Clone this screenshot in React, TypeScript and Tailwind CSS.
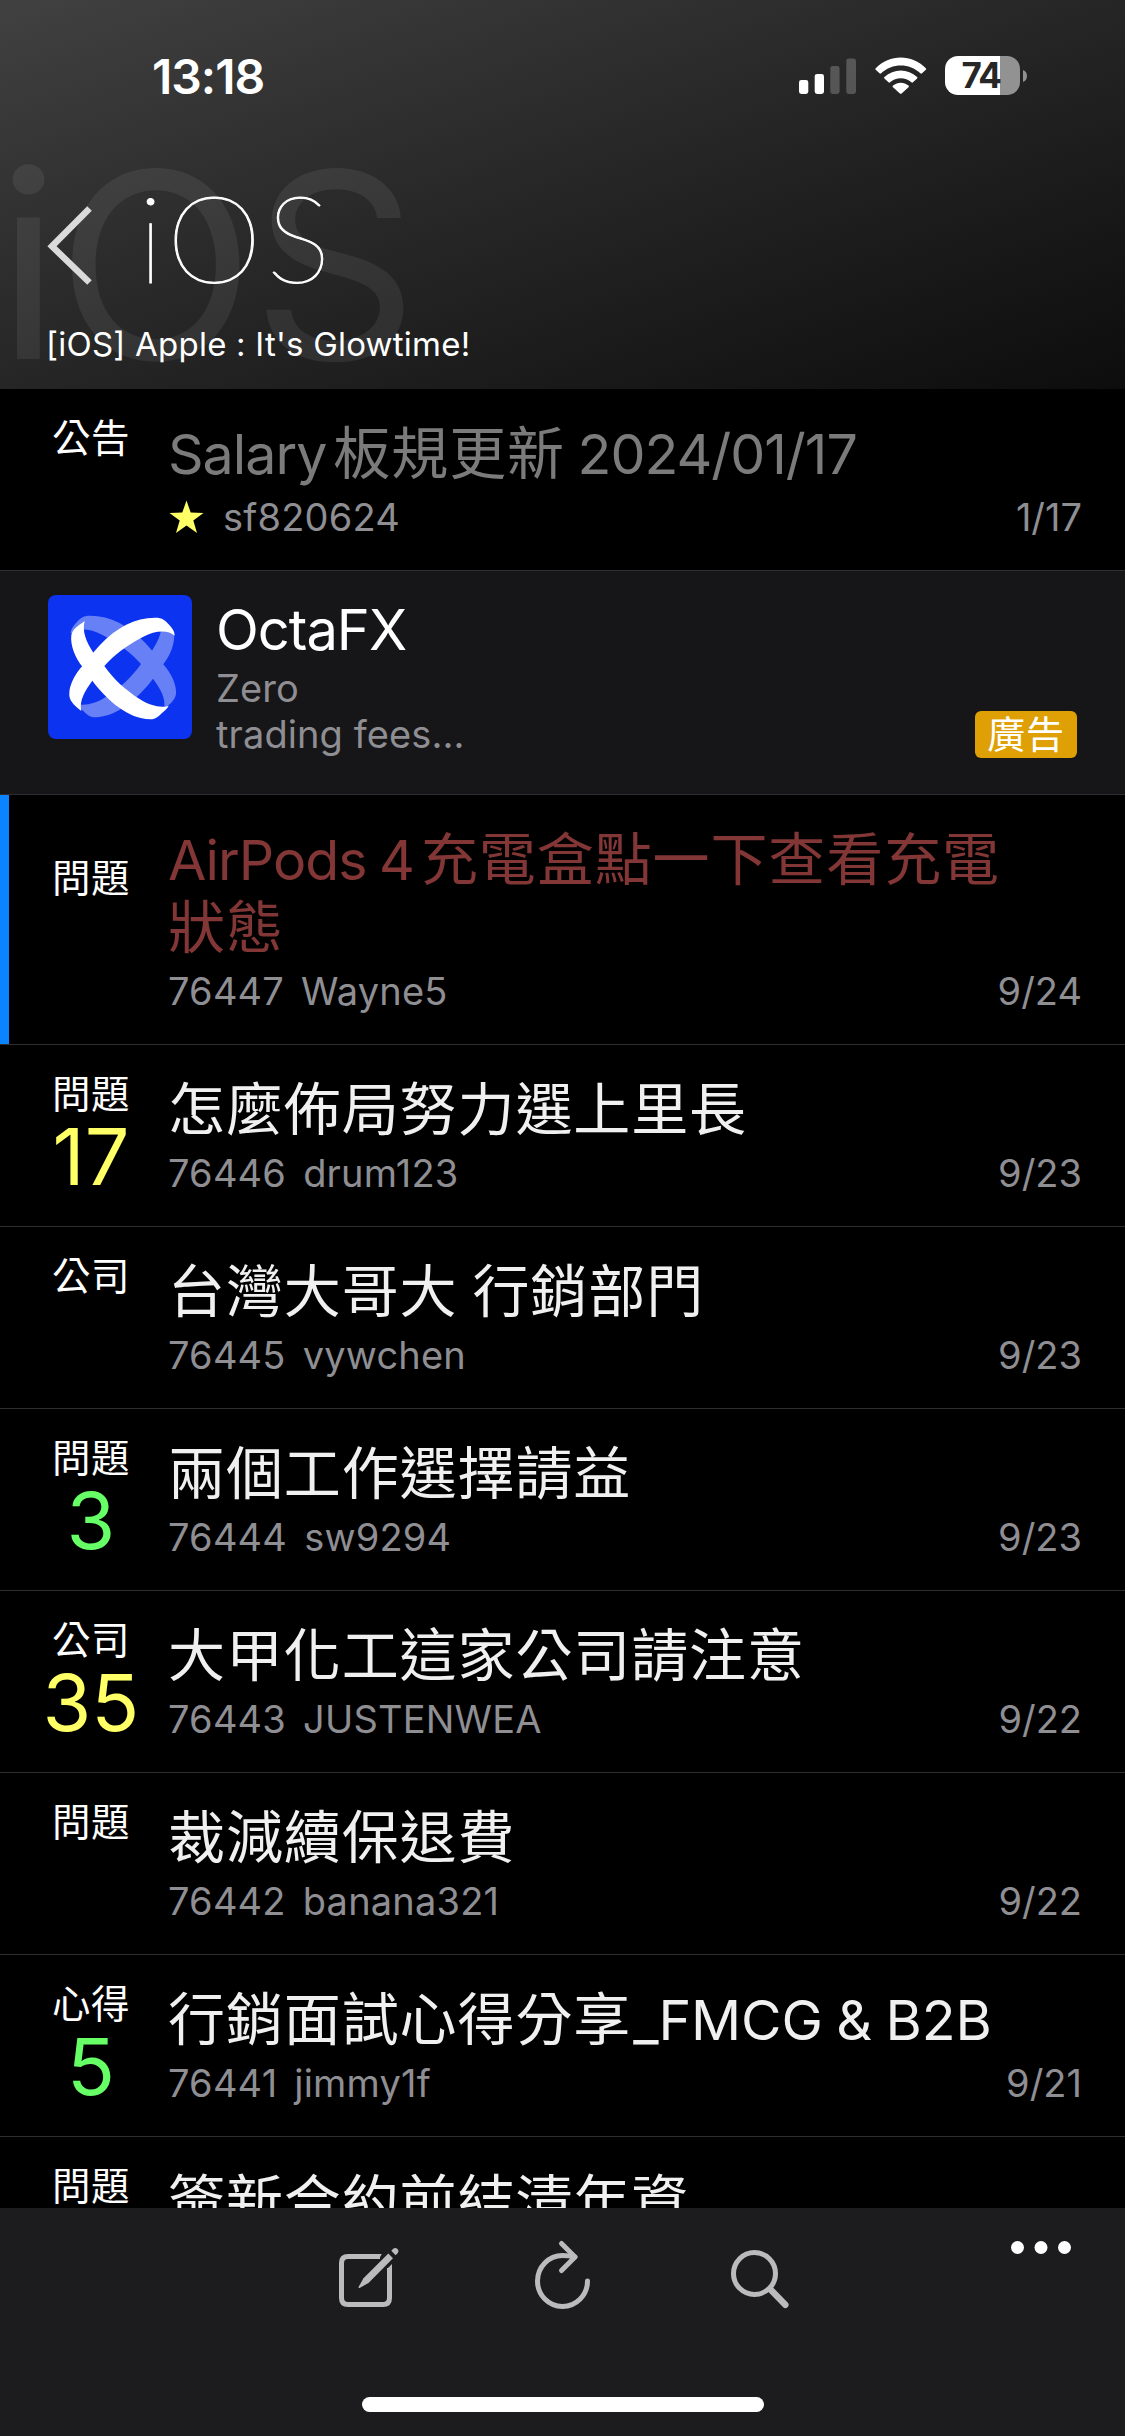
import React from 'react';

interface Post {
  tag: string;
  title: React.ReactNode;
  author: string;
  date: string;
  id?: string;
  count?: number;
  countColor?: string;
  titleColor?: string;
  pinned?: boolean;
  marked?: boolean;
}

interface LatinProps {
  children: React.ReactNode;
  className?: string;
}

// Latin runs are set a little tighter than the Chinese glyphs
const Latin: React.FC<LatinProps> = ({ children, className = 'tracking-[-1px]' }) => (
  <span className={`text-[55.5px] ${className}`}>{children}</span>
);

const topPosts: Post[] = [
  {
    tag: '公告',
    title: <><Latin>Salary</Latin><span className="ml-[7px]">板規更新</span><Latin> 2024/01/17</Latin></>,
    author: 'sf820624',
    date: '1/17',
    titleColor: 'text-[#7b7b7b]',
    pinned: true,
  },
];

const posts: Post[] = [
  {
    tag: '問題',
    title: <><Latin>AirPods 4</Latin><span className="ml-[7px]">充電盒點一下查看充電狀態</span></>,
    id: '76447',
    author: 'Wayne5',
    date: '9/24',
    titleColor: 'text-[#823636]',
    marked: true,
  },
  { tag: '問題', title: '怎麼佈局努力選上里長', id: '76446', author: 'drum123', date: '9/23', count: 17, countColor: 'text-[#ffff66]' },
  { tag: '公司', title: '台灣大哥大 行銷部門', id: '76445', author: 'vywchen', date: '9/23' },
  { tag: '問題', title: '兩個工作選擇請益', id: '76444', author: 'sw9294', date: '9/23', count: 3, countColor: 'text-[#66ff66]' },
  { tag: '公司', title: '大甲化工這家公司請注意', id: '76443', author: 'JUSTENWEA', date: '9/22', count: 35, countColor: 'text-[#ffff66]' },
  { tag: '問題', title: '裁減續保退費', id: '76442', author: 'banana321', date: '9/22' },
  {
    tag: '心得',
    title: <>行銷面試心得分享<Latin className="ml-[2px] tracking-[-0.1px]">_FMCG &amp; B2B</Latin></>,
    id: '76441',
    author: 'jimmy1f',
    date: '9/21',
    count: 5,
    countColor: 'text-[#66ff66]',
  },
  { tag: '問題', title: '簽新合約前結清年資', id: '76440', author: 'jimmy1f', date: '9/21' },
];

const StatusBar: React.FC = () => (
  <div className="flex h-[150px] items-start justify-between pl-[152px] pr-[98px]">
    <span className="mt-[47px] text-[48px] font-semibold leading-[60px] tracking-[-1px]">13:18</span>
    <div className="mt-[56px] flex h-[39px] items-center">
      <svg width="58" height="36" viewBox="0 0 58 36" fill="#fff">
        <rect x="0" y="22" width="9.3" height="14" rx="2.4" />
        <rect x="15.7" y="16" width="9.3" height="20" rx="2.4" />
        <rect x="31.3" y="8" width="9.3" height="28" rx="2.4" opacity=".22" />
        <rect x="47.3" y="0.5" width="9.7" height="35.5" rx="2.4" opacity=".22" />
      </svg>
      <svg className="ml-[18px]" width="52" height="37" viewBox="0 0 52 37" fill="#fff">
        <path d="M0.7 11.2 C14.5 -3 37 -3 50.8 11.2 Q51.6 12 50.8 12.8 L47 16.3 Q46.2 17 45.4 16.3 C34.5 5.8 17 5.8 6.1 16.3 Q5.3 17 4.5 16.3 L0.7 12.8 Q0 12 0.7 11.2 Z" />
        <path d="M9.4 20 C18.6 11.2 33 11.2 42.1 20 Q42.9 20.8 42.1 21.6 L38 25.3 Q37.2 26 36.4 25.3 C30.5 20 21 20 15.1 25.3 Q14.3 26 13.5 25.3 L9.4 21.6 Q8.6 20.8 9.4 20 Z" />
        <path d="M18 28.6 C22.4 24.7 29.1 24.7 33.5 28.6 Q34.3 29.4 33.5 30.2 L26.6 36.5 Q25.75 37.2 24.9 36.5 L18 30.2 Q17.2 29.4 18 28.6 Z" />
      </svg>
      <div className="ml-[18px] flex h-[39px] w-[75px] items-center justify-center rounded-[13px] bg-linear-to-r from-white from-73% to-[#929292] to-73%">
        <span className="mr-[3px] text-[35px] font-bold leading-[39px] tracking-[-1.5px] text-[#272727]">74</span>
      </div>
      <svg className="ml-[3px]" width="4" height="12" viewBox="0 0 4 12" fill="#929292">
        <path d="M0 0 C5.3 1.5 5.3 10.5 0 12 Z" />
      </svg>
    </div>
  </div>
);

const Header: React.FC = () => (
  <header className="relative h-[389px] shrink-0 bg-linear-to-br from-[#414141] to-[#0d0d0d]">
    <div className="absolute left-[-3px] top-[115px] text-[259px] leading-[300px] tracking-[-3px] text-white/[0.07]">iOS</div>
    <div className="relative">
      <StatusBar />
      <div className="flex h-[165px] items-start pl-[46px]">
        <svg className="mt-[54px]" width="48" height="84" viewBox="0 0 48 84" fill="none">
          <path d="M43.5 4.5 L6 42.3 L43.5 78.5" stroke="#dadada" strokeWidth="6.5" />
        </svg>
        <h1 className="ml-[44px] mt-[17px] font-['Lato','Inter',sans-serif] text-[121px] font-thin leading-[140px] tracking-[5px] [-webkit-text-stroke:1px_white]">iOS</h1>
      </div>
      <p className="pl-[46px] text-[33px] leading-[58px] tracking-[0.22px]">[iOS] Apple : It's Glowtime!</p>
    </div>
  </header>
);

const StarIcon: React.FC = () => (
  <svg className="ml-[1px] mr-[19px] mt-[7px]" width="35" height="34" viewBox="0 0 35 34" fill="#ffff66">
    <path d="M17.5 0.5 L21.7 12.6 L34.5 12.9 L24.3 20.6 L28 33 L17.5 25.6 L7 33 L10.7 20.6 L0.5 12.9 L13.3 12.6 Z" />
  </svg>
);

const PostRow: React.FC<{ post: Post }> = ({ post }) => (
  <article className={`flex shrink-0 border-b border-[#2e2e30] ${post.marked ? 'h-[250px]' : 'h-[182px]'}`}>
    <div className={`w-[9px] ${post.marked ? 'bg-[#0a84ff]' : ''}`} />
    <div className="ml-[27px] h-[127px] w-[110px] self-center text-center">
      <div className="text-[38.5px] leading-[45px] tracking-[0.5px] text-white">{post.tag}</div>
      {post.count !== undefined && (
        <div className={`text-[79px] leading-[78px] ${post.countColor}`}>{post.count}</div>
      )}
    </div>
    <div className="ml-[22px] flex-1 pr-[43px] pt-[31px]">
      <h2 className={`w-[850px] text-[57px] leading-[68px] tracking-[0.9px] [word-spacing:-2px] ${post.titleColor || 'text-[#f0f0f0]'}`}>
        {post.title}
      </h2>
      <div className="mt-[5px] flex text-[38px] leading-[48px] tracking-[0.2px] text-[#8e8e93]">
        {post.pinned && <StarIcon />}
        {post.id && <span className="mr-[17px]">{post.id}</span>}
        <span>{post.author}</span>
        <span className="ml-auto tracking-normal">{post.date}</span>
      </div>
    </div>
  </article>
);

const OctaLogo: React.FC = () => (
  <svg className="h-[144px] w-[144px] rounded-[8px]" viewBox="24 30 432 432">
    <rect x="24" y="30" width="432" height="432" fill="#0c33f0" />
    <defs>
      <g id="ribbon">
        <path d="M88 325 C88 300 106 265 127 243 C150 215 165 196 180 180 C230 127 285 98 345 98 C368 98 376 106 388 120 C398 131 404 140 404 152 C385 133 345 136 310 155 C260 181 222 210 193 243 C180 258 168 272 157 287 C135 318 117 345 124 378 C100 360 86 345 88 325 Z" />
        <path d="M94 150 C90 180 106 220 127 245 C137 259 147 274 157 287 C205 350 265 400 330 403 C345 404 355 395 366 384 C376 374 383 370 386 362 C365 371 330 362 300 343 C255 314 220 282 193 243 C182 229 170 218 160 203 C138 169 126 140 134 108 C112 124 98 132 94 150 Z" />
      </g>
    </defs>
    <g fill="#6780f6" transform="translate(496 -6) scale(-1 1)">
      <use href="#ribbon" />
    </g>
    <use href="#ribbon" fill="#fff" />
  </svg>
);

const AdRow: React.FC = () => (
  <aside className="flex h-[224px] shrink-0 border-b border-[#2e2e30] bg-[#161618] pl-[48px] pr-[48px] pt-[24px]">
    <OctaLogo />
    <div className="ml-[24px] flex-1">
      <div className="text-[56px] leading-[70px] tracking-[-1px] text-white">OctaFX</div>
      <div className="text-[38px] leading-[46px] tracking-[0.1px] text-[#8e8e93]">
        Zero
        <br />
        trading fees...
      </div>
    </div>
    <div className="mt-[116px] h-[47px] w-[102px] rounded-[6px] bg-[#dea004] text-center text-[38px] leading-[46px] tracking-[0.8px] text-white">廣告</div>
  </aside>
);

const Toolbar: React.FC = () => (
  <footer className="flex h-[228px] shrink-0 flex-col bg-[#1c1c1e]">
    <div className="flex h-[189px] items-start gap-[110px] pl-[327px] pt-[27px] text-[#bbbbbd]">
      <svg width="84" height="84" viewBox="0 0 84 84" fill="none" stroke="currentColor" strokeWidth="5">
        <path d="M53 21.5 H21 Q14.5 21.5 14.5 28 V63 Q14.5 69.5 21 69.5 H56 Q62.5 69.5 62.5 63 V33" />
        <path d="M52 24 L54.8 19 H50 V24 Z M60 34 L65 29 V35 H60 Z" fill="currentColor" stroke="none" />
        <path d="M61.3 18.5 L66 23.2 L41.5 48 L33 52.8 Q31 53.5 31.8 51.5 L36.5 43.2 Z" fill="currentColor" stroke="none" />
        <path d="M64.3 15.8 L66.5 13.6 Q68.5 12 70.5 14 Q72.5 16 70.8 18 L68.6 20.2 Z" fill="currentColor" stroke="none" />
      </svg>
      <svg width="84" height="84" viewBox="0 0 84 84" fill="none" stroke="currentColor" strokeWidth="5" strokeLinecap="round" strokeLinejoin="round">
        <path d="M66.5 46 A25 25.5 0 1 1 41.5 20.5 Q48 20.5 54 22" />
        <path d="M40.5 8.5 L54 22 L40.5 35.5" />
      </svg>
      <svg width="84" height="84" viewBox="0 0 84 84" fill="none" stroke="currentColor" strokeLinecap="round">
        <circle cx="39.5" cy="38.5" r="21" strokeWidth="5" />
        <path d="M56 55 L70.3 69.8" strokeWidth="6.5" />
      </svg>
      <svg className="ml-auto mr-[54px] mt-[6px]" width="60" height="13" viewBox="0 0 60 13" fill="#fff">
        <circle cx="6.5" cy="6.5" r="6.5" />
        <circle cx="30" cy="6.5" r="6.5" />
        <circle cx="53.5" cy="6.5" r="6.5" />
      </svg>
    </div>
    <div className="h-[15px] w-[402px] self-center rounded-full bg-white" />
  </footer>
);

const App: React.FC = () => {
  return (
    <div className="flex h-[2436px] w-[1125px] flex-col overflow-hidden bg-black font-['Inter','Noto_Sans_CJK_TC',sans-serif] text-white">
      <Header />
      <main className="flex min-h-0 flex-1 flex-col overflow-hidden">
        {topPosts.map(post => <PostRow key={post.author} post={post} />)}
        <AdRow />
        {posts.map(post => <PostRow key={post.id} post={post} />)}
      </main>
      <Toolbar />
    </div>
  );
};

export default App;
